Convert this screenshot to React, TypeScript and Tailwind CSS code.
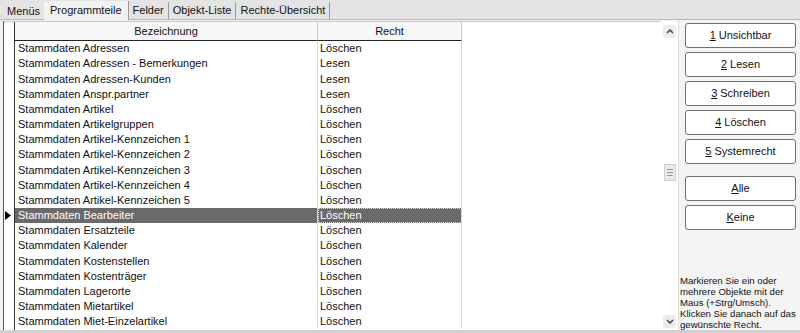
import React from "react";

const rows: [string, string][] = [
  ["Stammdaten Adressen", "Löschen"],
  ["Stammdaten Adressen - Bemerkungen", "Lesen"],
  ["Stammdaten Adressen-Kunden", "Lesen"],
  ["Stammdaten Anspr.partner", "Lesen"],
  ["Stammdaten Artikel", "Löschen"],
  ["Stammdaten Artikelgruppen", "Löschen"],
  ["Stammdaten Artikel-Kennzeichen 1", "Löschen"],
  ["Stammdaten Artikel-Kennzeichen 2", "Löschen"],
  ["Stammdaten Artikel-Kennzeichen 3", "Löschen"],
  ["Stammdaten Artikel-Kennzeichen 4", "Löschen"],
  ["Stammdaten Artikel-Kennzeichen 5", "Löschen"],
  ["Stammdaten Bearbeiter", "Löschen"],
  ["Stammdaten Ersatzteile", "Löschen"],
  ["Stammdaten Kalender", "Löschen"],
  ["Stammdaten Kostenstellen", "Löschen"],
  ["Stammdaten Kostenträger", "Löschen"],
  ["Stammdaten Lagerorte", "Löschen"],
  ["Stammdaten Mietartikel", "Löschen"],
  ["Stammdaten Miet-Einzelartikel", "Löschen"],
];

const SEL = 11;

function Btn({ k, label, mt, gap }: { k: string; label: string; mt?: boolean; gap?: boolean }) {
  return (
    <div
      className={
        "h-[25px] w-[111px] rounded-[3px] border border-[#707070] bg-white flex items-center justify-center text-[11px] text-[#111] " +
        (mt ? "mt-[12px]" : "mt-[4px]")
      }
    >
      <span className="underline underline-offset-[1px]">{k}</span>
      <span className={gap ? "ml-[3px]" : ""}>{label}</span>
    </div>
  );
}

export default function App() {
  return (
    <div
      className="w-[800px] h-[333px] bg-[#e4e4e4] overflow-hidden flex flex-col text-[11px] text-[#111]"
      style={{ fontFamily: '"Liberation Sans", Arial, sans-serif' }}
    >
      {/* Tabs */}
      <div className="h-[19px] flex items-end pl-[3px] shrink-0">
        <div className="h-[16px] px-[4px] flex items-center">Menüs</div>
        <div className="h-[19px] px-[6px] flex items-start pt-[1px] bg-[#f2f2f2] border-r border-[#9a9a9a] relative top-[1px]">
          Programmteile
        </div>
        <div className="h-[17px] px-[4px] flex items-center border-r border-[#9a9a9a]">Felder</div>
        <div className="h-[17px] px-[4px] flex items-center border-r border-[#9a9a9a]">Objekt-Liste</div>
        <div className="h-[17px] px-[4px] flex items-center border-r border-[#9a9a9a]">Rechte-Übersicht</div>
      </div>

      {/* Body */}
      <div className="flex-1 flex border-t border-[#b8b8b8] bg-[#f2f2f2] min-h-0">
        {/* Grid panel */}
        <div className="ml-[3px] w-[675px] bg-white flex border-l border-[#555] mt-[1px] min-h-0">
          <div className="flex-1 flex flex-col min-w-0">
            {/* header */}
            <div className="h-[20px] flex shrink-0 border-t border-[#c8c8c8]">
              <div className="w-[11px] border-r border-[#333] bg-white" />
              <div className="w-[303px] border-r border-[#c8c8c8] border-b border-b-[#222] bg-[#f7f7f7] flex items-center justify-center">
                Bezeichnung
              </div>
              <div className="w-[144px] border-r border-[#c8c8c8] border-b border-b-[#222] bg-[#f7f7f7] flex items-center justify-center">
                Recht
              </div>
              <div className="flex-1" />
            </div>
            {/* rows */}
            <div className="flex-1 flex min-h-0">
              <div className="w-[11px] border-r border-[#333] flex flex-col">
                {rows.map((_, i) => (
                  <div key={i} className="h-[15.17px] flex items-center pl-[1px]">
                    {i === SEL && (
                      <svg width="6" height="9" viewBox="0 0 6 9">
                        <path d="M0 0 L6 4.5 L0 9 Z" fill="#000" />
                      </svg>
                    )}
                  </div>
                ))}
              </div>
              <div className="w-[447px] flex flex-col">
                {rows.map(([a, b], i) => (
                  <div
                    key={i}
                    className={
                      "h-[15.17px] flex items-center " +
                      (i === SEL ? "bg-[#6a6a6a] text-white" : "")
                    }
                  >
                    <div className="w-[303px] pl-[3px] h-full flex items-center border-r border-[#d8d8d8] whitespace-nowrap overflow-hidden">
                      {a}
                    </div>
                    <div
                      className={
                        "w-[144px] pl-[2px] h-full flex items-center border-r border-[#d8d8d8] " +
                        (i === SEL ? "outline-1 outline-dotted outline-[#ddd] -outline-offset-1" : "")
                      }
                    >
                      {b}
                    </div>
                  </div>
                ))}
              </div>
              <div className="flex-1" />
            </div>
          </div>
          {/* scrollbar */}
          <div className="w-[17px] flex flex-col items-center pt-[4px] pb-[2px] bg-white">
            <div className="w-[13px] h-[13px] bg-[#ececec] rounded-[2px] flex items-center justify-center">
              <svg width="8" height="5" viewBox="0 0 8 5">
                <path d="M1 4 L4 1 L7 4" stroke="#444" strokeWidth="1.5" fill="none" />
              </svg>
            </div>
            <div className="flex-1 flex flex-col items-center justify-center pb-[10px]">
              <div className="w-[12px] h-[17px] bg-[#eaeaea] border border-[#cfcfcf] flex flex-col items-center justify-center gap-[2px] mt-[2px]">
                <div className="w-[6px] h-px bg-[#999]" />
                <div className="w-[6px] h-px bg-[#999]" />
                <div className="w-[6px] h-px bg-[#999]" />
              </div>
            </div>
            <div className="w-[13px] h-[13px] bg-[#ececec] rounded-[2px] flex items-center justify-center">
              <svg width="8" height="5" viewBox="0 0 8 5">
                <path d="M1 1 L4 4 L7 1" stroke="#444" strokeWidth="1.5" fill="none" />
              </svg>
            </div>
          </div>
        </div>

        {/* Right panel */}
        <div className="flex-1 flex flex-col pl-[6px] pt-[3px] bg-[#f4f4f4] border-l border-[#dcdcdc]">
          <div className="-mt-[4px]" />
          <Btn k="1" label="Unsichtbar" gap />
          <Btn k="2" label="Lesen" gap />
          <Btn k="3" label="Schreiben" gap />
          <Btn k="4" label="Löschen" gap />
          <Btn k="5" label="Systemrecht" gap />
          <Btn k="A" label="lle" mt />
          <Btn k="K" label="eine" />
          <div className="flex-1" />
          <div className="-ml-[5px] text-[9.6px] leading-[11px] pb-0 whitespace-nowrap">
            Markieren Sie ein oder
            <br />
            mehrere Objekte mit der
            <br />
            Maus (+Strg/Umsch).
            <br />
            Klicken Sie danach auf das
            <br />
            gewünschte Recht.
          </div>
        </div>
      </div>
      <div className="h-[3px] bg-[#d0d0d0] shrink-0" />
    </div>
  );
}
